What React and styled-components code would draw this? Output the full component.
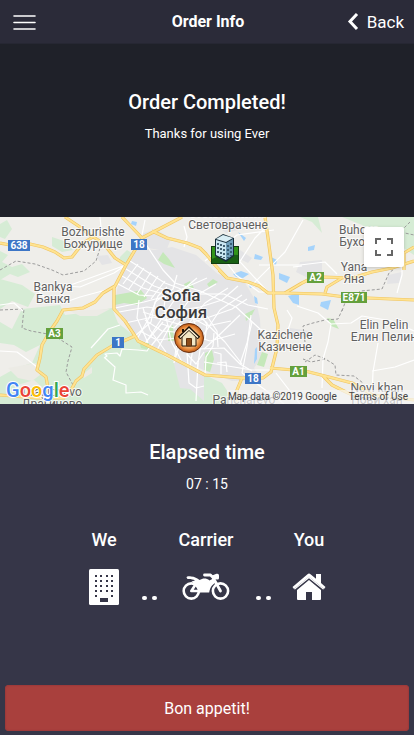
import React from "react";
import styled, { createGlobalStyle } from "styled-components";

const GlobalStyle = createGlobalStyle`
  *, *::before, *::after { box-sizing: border-box; }
  body {
    margin: 0;
    background: #363648;
    color: #fff;
    font-family: Roboto, "Liberation Sans", sans-serif;
    -webkit-font-smoothing: antialiased;
  }
  button { font: inherit; color: inherit; border: 0; cursor: pointer; }
`;

const Page = styled.div`
  min-height: 100vh;
  display: flex;
  flex-direction: column;
`;

const Toolbar = styled.header`
  display: grid;
  grid-template-columns: 1fr auto 1fr;
  align-items: center;
  height: 44px;
  padding: 0 10px 0 12px;
  background: #2b2b39;
  border-bottom: 1px solid #262733;
`;

const ToolbarTitle = styled.h1`
  margin: 0;
  font-size: 16px;
  line-height: 24px;
  font-weight: 700;
`;

const ToolbarButton = styled.button`
  display: flex;
  align-items: center;
  gap: 8px;
  padding: 0;
  background: none;
  font-size: 17px;
  line-height: 24px;
  justify-self: ${(p) => p.$side};
`;

const Hero = styled.section`
  padding: 46px 16px 71px;
  background: #1f2129;
  text-align: center;
`;

const Heading = styled.h2`
  margin: 0;
  font-size: 20px;
  line-height: 24px;
  font-weight: 500;
`;

const Note = styled.p`
  margin: 8px 0 0;
  font-size: ${(p) => (p.$large ? 14 : 13)}px;
  line-height: 24px;
`;

const MapFrame = styled.section`
  position: relative;
  height: 187px;
  overflow: hidden;
  background: #efeeea;
`;

const MapCanvas = styled.svg`
  display: block;
  width: 100%;
  height: 100%;
`;

const FullscreenButton = styled.button`
  position: absolute;
  top: 10px;
  right: 10px;
  width: 40px;
  height: 40px;
  display: grid;
  place-items: center;
  padding: 0;
  background: #fff;
  border-radius: 2px;
  box-shadow: 0 1px 4px -1px rgba(0, 0, 0, 0.3);
`;

const Attribution = styled.div`
  position: absolute;
  right: 0;
  bottom: 0;
  display: flex;
  gap: 12px;
  padding: 0 6px 0 1px;
  background: rgba(245, 245, 245, 0.7);
  color: #444;
  font-size: 10px;
  line-height: 14px;
`;

const TermsLink = styled.a`
  color: inherit;
  text-decoration: none;
`;

const Summary = styled.section`
  flex: 1;
  padding: 36px 16px 24px;
  text-align: center;
`;

const Steps = styled.div`
  display: grid;
  grid-template-columns: 48px 42px 72px 42px 50px;
  justify-content: center;
  margin-top: 32px;
`;

const Step = styled.div`
  display: flex;
  flex-direction: column;
  align-items: center;
`;

const StepLabel = styled.h3`
  margin: 0;
  font-size: 18px;
  line-height: 24px;
  font-weight: 500;
`;

const StepIcon = styled.div`
  display: grid;
  place-items: center;
  height: 40px;
  margin-top: 15px;
`;

const Dots = styled.div`
  align-self: end;
  display: flex;
  justify-content: center;
  gap: 5px;
  padding-bottom: 7px;
`;

const Dot = styled.span`
  width: 5px;
  height: 4px;
  border-radius: 2px;
  background: #fff;
`;

const Footer = styled.footer`
  padding: 0 5px 4px;
`;

const ActionButton = styled.button`
  display: block;
  width: 100%;
  height: 46px;
  border-radius: 4px;
  background: #a9403d;
  font-size: 16px;
  box-shadow: inset 0 0 1px 1px #9d3a3a;
`;

const PARKS = [
  "M0 7L7 3L12 12L5 22L0 20Z",
  "M0 34L8 38L2 45L12 50L22 47L30 55L18 60L10 57L0 63Z",
  "M0 62L22 68L35 77L28 90L12 84L0 92Z",
  "M22 92L60 88L65 98L90 95L112 91L118 106L138 122L167 141L205 158L205 187L0 187L0 160L16 151L32 146L40 128L26 135L14 128L0 126L0 105L12 112Z",
  "M205 158L222 166L236 187L205 187Z",
  "M300 0L312 5L322 16L318 0Z",
  "M342 0L414 0L414 38L402 30L385 24L362 8Z",
  "M120 40L127 33L135 38L130 47L119 45Z",
  "M52 20L64 24L73 33L62 35L52 29Z",
];

const BRIGHT_PARKS = [
  "M115 78L132 75L141 73L147 81L137 88L124 86L115 88Z",
  "M158 43L163 35L169 42L175 51L164 47Z",
  "M207 67L213 62L218 65L209 70Z",
  "M184 67L190 64L194 71L185 73Z",
  "M327 101L333 102L339 112L331 109Z",
  "M257 148L262 135L268 137L264 150Z",
  "M205 136L212 133L214 142L210 155L204 153Z",
  "M168 112L173 108L174 124L168 124Z",
  "M245 97L255 92L251 100L246 104Z",
  "M139 124L149 126L149 133L141 131Z",
];

const BARE = [
  "M8 151L36 146L40 158L32 164L18 161Z",
  "M70 94L110 92L97 99L80 99Z",
  "M18 168L34 163L42 170L38 177L22 175Z",
  "M52 117L62 112L60 122Z",
  "M82 158L92 150L92 156L84 161Z",
];

const URBAN = [
  "M122 55L137 31L155 33L172 30L196 38L218 57L245 66L256 84L260 102L262 140L254 151L262 163L232 164L208 155L168 137L138 121L114 92L117 73Z",
  "M139 18L156 12L171 22L166 34L141 30Z",
  "M300 45L322 43L322 58L308 61L296 55Z",
  "M240 33L252 41L248 46L236 40Z",
  "M96 39L108 38L112 46L102 48Z",
  "M290 111L310 114L305 122L288 119Z",
  "M172 139L204 157L204 184L190 172L180 171Z",
  "M210 4L232 2L242 12L226 16Z",
  "M388 58L402 55L399 66L387 67Z",
];

const WATER = [
  "M132 4L137 5L136 9L131 7Z",
  "M255 37L263 40L261 43L254 42Z",
  "M233 57L241 54L249 57L243 61L236 60Z",
  "M279 56L290 60L287 66L279 62Z",
  "M288 79L299 76L299 88L293 86Z",
  "M321 85L331 83L328 93L320 89Z",
  "M248 65L253 70L250 71Z",
  "M238 15L246 21L244 24Z",
  "M308 30L315 28L314 33L308 34Z",
  "M254 147L255 132L257 130L257 142Z",
  "M360 48L366 51L362 53Z",
  "M271 40L277 43L276 48L271 47Z",
  "M254 79L257 81L258 87L255 86Z",
];

const STREETS = [
  "M126 48L65 70M126 48L114 56L80 70L52 68M142 21L151 35L163 53L175 66L200 74L236 90L260 112L282 122",
  "M130 44L165 66L181 72M126 52L154 69L171 75M122 59L143 71L160 76M118 67L139 78L154 79",
  "M138 47L123 67M144 51L129 72M151 55L137 77M158 59L144 80M165 64L151 82",
  "M115 91L144 85L163 80L182 72L207 61M135 119L151 105L155 85L173 72L177 58",
  "M119 95L147 90L175 94L200 90L222 83L238 69M125 106L153 100L182 108L204 102L232 92L247 82",
  "M137 122L149 101L158 79L167 70M145 127L164 98L180 75L197 61M157 133L170 109L190 82L216 67",
  "M175 142L185 111L205 86L228 71M197 153L202 120L220 93L242 78",
  "M140 114L157 123L177 121L198 132L224 131L240 147L252 154M145 103L162 114L186 116L210 124L235 117",
  "M143 95L168 103L187 98L207 109L231 104M176 81L198 77L224 77L248 88L268 92",
  "M148 126L137 101L139 83M166 135L150 113L143 91M182 145L171 124L164 90L166 77",
  "M204 132L216 121L240 98M240 147L247 126L252 105M205 105L225 125L242 147",
  "M146 125L163 105M151 129L168 108M190 151L196 110L190 91",
  "M204 145L252 153L272 153M242 156L247 130L251 98M242 156L275 180L284 187M162 107L174 111L181 104M207 99L217 114L218 130M198 98L207 106L205 123",
  "M205 158L206 140L213 129L214 116M187 137L196 147L204 135M174 146L177 124L188 122L198 128",
  "M214 135L221 137L221 157M217 146L226 145L227 155",
  "M104 141L107 139L105 137L117 136L120 139L122 132L138 133L147 134L151 128M105 141L115 150L113 163L126 168L126 176L141 175L148 178M91 131L100 121L108 112L120 108",
  "M187 135L189 166L196 171L204 169M198 146L196 184M170 139L187 148",
  "M253 67L285 35L303 3M259 48L300 48L325 45L337 57M302 49L293 50M230 34L267 74M239 46L255 21L268 8M205 44L237 18L274 13",
  "M272 75L259 75L236 58L219 35M402 35L402 58L397 76M323 142L322 171M323 142L328 125L331 107L318 96L297 89M331 107L351 106L362 99L392 104L414 114",
  "M378 126L373 155L372 179M372 154L395 150L414 143M0 134L17 135L28 143L37 150M184 9L187 20L184 30M145 3L142 18M100 0L102 20",
  "M35 70L45 81L63 86L80 80L106 73M0 88L14 86L23 94M276 156L300 187M287 93L292 101L288 113",
];

const BOUNDARIES = [
  "M0 53L16 44L35 47L52 53L63 58L84 54L96 44L101 28",
  "M0 93L24 92L22 111L31 114L53 118L72 130L68 144L66 155L73 168L70 180",
  "M305 145L315 138L326 142L311 145L303 142M305 125L303 109L313 106L325 103L338 102L343 91M327 143L335 148L336 158L354 159L363 166",
  "M342 94L346 83L361 74L382 72L389 56L394 52M410 5L400 15L414 18",
];

const HIGHWAYS = [
  "M0 26L10 28L30 27L43 30L55 35L64 41L72 40L83 26L93 20",
  "M65 0L80 10L90 18L103 26L115 41L126 48",
  "M122 0L142 21L135 33L126 48L115 69L103 76L95 85L83 91L63 93L57 104L50 114L42 128L40 141L37 153L46 160L48 171L40 181",
  "M114 70L114 92L125 104L135 119L138 124L167 138L205 158L242 161L263 161L271 155L277 131L278 108L274 91L273 58L268 21L265 0",
  "M135 119L112 129L97 138L84 152L82 159L76 164L71 173L62 181",
  "M0 178L37 181L65 181",
  "M142 21L182 0",
  "M152 14L167 21L187 26L200 31L206 37L215 48L227 61L248 65L259 69L268 76L285 76L322 77L345 80L414 83",
  "M219 53L227 61M285 76L302 66L310 62L323 60L352 61L372 55L392 51L414 44M404 53L404 36L414 30",
  "M325 76L327 70L342 61",
  "M270 151L305 154L325 159L352 166L373 178L414 183M323 159L332 168L346 175L357 180",
  "M242 161L237 173L237 187",
];

const PLACES = [
  { x: 93, y: 19, lines: ["Bozhurishte", "Божурище"] },
  { x: 53, y: 74, lines: ["Bankya", "Банкя"] },
  { x: 228, y: 0, lines: ["Svetovrachene", "Световрачене"] },
  { x: 359, y: 17, lines: ["Buhovo", "Бухово"] },
  { x: 354, y: 54, lines: ["Yana", "Яна"] },
  { x: 285, y: 122, lines: ["Kazichene", "Казичене"] },
  { x: 384, y: 112, lines: ["Elin Pelin", "Елин Пелин"] },
  { x: 377, y: 175, lines: ["Novi khan", "Нови хан"] },
  { x: 52, y: 179, lines: ["Dragichevo", "Драгичево"] },
  { x: 244, y: 187, lines: ["Pancharevo"] },
];

const SHIELDS = [
  { x: 8, y: 23, w: 22, text: "638", color: "#3d76c6" },
  { x: 131, y: 22, w: 16, text: "18", color: "#3d76c6" },
  { x: 112, y: 120, w: 12, text: "1", color: "#3d76c6" },
  { x: 245, y: 156, w: 16, text: "18", color: "#3d76c6" },
  { x: 46, y: 111, w: 17, text: "A3", color: "#64a03c" },
  { x: 307, y: 55, w: 17, text: "A2", color: "#64a03c" },
  { x: 341, y: 75, w: 26, text: "E871", color: "#64a03c" },
  { x: 290, y: 149, w: 17, text: "A1", color: "#64a03c" },
];

const LOGO_LETTERS = [
  ["G", "#4285f4"],
  ["o", "#ea4335"],
  ["o", "#fbbc05"],
  ["g", "#4285f4"],
  ["l", "#34a853"],
  ["e", "#ea4335"],
];

const PlaceText = styled.text`
  font-size: ${(p) => (p.$city ? 17 : 12)}px;
  font-weight: ${(p) => (p.$city ? 500 : 400)};
  fill: ${(p) => (p.$city ? "#3b3b3b" : "#606060")};
  stroke: #fff;
  stroke-opacity: 0.7;
  stroke-width: 2px;
  paint-order: stroke;
  stroke-linejoin: round;
  text-anchor: middle;
`;

const ShieldText = styled.text`
  font-size: 10px;
  font-weight: 700;
  fill: #fff;
  text-anchor: middle;
`;

const LogoText = styled.text`
  font-size: 20px;
  font-weight: 500;
  stroke: #fff;
  stroke-width: 2px;
  paint-order: stroke;
`;

const Shapes = ({ items, ...rest }) => (
  <g {...rest}>
    {items.map((d) => (
      <path key={d} d={d} />
    ))}
  </g>
);

function CompanyMarker() {
  return (
    <g transform="translate(211 16)">
      <path d="M0 13H28V31H0Z" fill="#123c12" />
      <path d="M1 14H27V30H1Z" fill="#329519" />
      <path d="M1 26L12 21L27 22V30H1Z" fill="#185f12" />
      <path d="M4 6L12 1L23 5V23L15 29L4 23Z" fill="#172d3a" />
      <path d="M5 7L15 10V27L5 22Z" fill="#c9e6f1" />
      <path d="M15 10L22 6V22L15 27Z" fill="#6f9eb9" />
      <path d="M5 6L12 2L22 5L15 9Z" fill="#d9eef5" />
      <path d="M7 10V22M10 11V24M13 12V25" stroke="#173648" strokeWidth="1.5" strokeDasharray="2 2" />
      <path d="M17 12V25M20 10V23" stroke="#173648" strokeWidth="1.2" strokeDasharray="2 2" />
    </g>
  );
}

function HomeMarker() {
  return (
    <g transform="translate(174 106)">
      <circle cx="15" cy="15" r="14.5" fill="url(#homeGlow)" stroke="#6b3212" />
      <path d="M8 14V23H22V14L15 7Z" fill="#f3e8c6" stroke="#211408" />
      <path d="M5 15L15 5.5L25 15" fill="none" stroke="#1c1208" strokeWidth="3.6" />
      <path d="M6 14.5L15 6L24 14.5" fill="none" stroke="#fff3d6" strokeWidth="1.5" />
      <path d="M9 6V9" stroke="#1c1208" strokeWidth="2" />
      <path d="M12.5 15.5H17.5V23H12.5Z" fill="#8c4c1a" stroke="#5c3210" />
    </g>
  );
}

function DeliveryMap() {
  return (
    <MapCanvas viewBox="0 0 414 187" preserveAspectRatio="xMidYMid slice" role="img" aria-label="Map of Sofia">
      <defs>
        <radialGradient id="homeGlow" cx="50%" cy="50%" r="52%">
          <stop offset="0" stopColor="#fff0d0" />
          <stop offset="0.5" stopColor="#fbcd92" />
          <stop offset="0.8" stopColor="#e07f30" />
          <stop offset="1" stopColor="#a8480c" />
        </radialGradient>
      </defs>
      <rect width="414" height="187" fill="#efeeea" />
      <Shapes items={PARKS} fill="#d6ecd5" />
      <Shapes items={BARE} fill="#ecebe5" />
      <Shapes items={URBAN} fill="#e4e4e6" />
      <Shapes items={BRIGHT_PARKS} fill="#c5e8ba" />
      <Shapes items={WATER} fill="#a5d3fb" />
      <Shapes items={BOUNDARIES} fill="none" stroke="#9c9c9c" strokeWidth="1" strokeDasharray="3 2" />
      <Shapes items={STREETS} fill="none" stroke="#fff" strokeWidth="1.2" strokeLinejoin="round" />
      <Shapes items={HIGHWAYS} fill="none" stroke="#efc461" strokeWidth="3.2" strokeLinejoin="round" />
      <Shapes items={HIGHWAYS} fill="none" stroke="#ffe391" strokeWidth="2" strokeLinejoin="round" />
      {SHIELDS.map((s) => (
        <g key={`${s.text}-${s.x}`}>
          <rect x={s.x} y={s.y} width={s.w} height="11" fill={s.color} />
          <ShieldText x={s.x + s.w / 2} y={s.y + 9}>{s.text}</ShieldText>
        </g>
      ))}
      {PLACES.map((place) => (
        <PlaceText key={place.lines[0]} x={place.x} y={place.y}>
          {place.lines.map((line, i) => (
            <tspan key={line} x={place.x} dy={i ? 12 : 0}>{line}</tspan>
          ))}
        </PlaceText>
      ))}
      <PlaceText $city x="181" y="84">
        <tspan x="181">Sofia</tspan>
        <tspan x="181" dy="17">София</tspan>
      </PlaceText>
      <CompanyMarker />
      <HomeMarker />
      <LogoText x="6" y="180">
        {LOGO_LETTERS.map(([letter, color], i) => (
          <tspan key={i} fill={color}>{letter}</tspan>
        ))}
      </LogoText>
    </MapCanvas>
  );
}

const MenuIcon = () => (
  <svg width="24" height="16" viewBox="0 0 24 16" stroke="#fff" strokeWidth="1.6" strokeLinecap="round">
    <path d="M2 2H23M2 8.5H23M2 15H23" />
  </svg>
);

const ChevronIcon = () => (
  <svg width="12" height="18" viewBox="0 0 12 18" fill="none" stroke="#fff" strokeWidth="3">
    <path d="M10 1L3 8.5L10 16" />
  </svg>
);

const FullscreenIcon = () => (
  <svg width="18" height="18" viewBox="0 0 18 18" fill="none" stroke="#666" strokeWidth="2">
    <path d="M1 6V1H6M12 1H17V6M17 12V17H12M6 17H1V12" />
  </svg>
);

const BUILDING_WINDOWS = [6, 11, 16, 21, 26].flatMap((y) =>
  [6, 11, 17, 22].filter((x) => y < 26 || x === 6 || x === 22).map((x) => [x, y])
);

const BuildingIcon = () => (
  <svg width="30" height="36" viewBox="0 0 30 36">
    <rect width="30" height="36" rx="1.5" fill="#fff" />
    <g fill="#363648">
      {BUILDING_WINDOWS.map(([x, y]) => (
        <rect key={`${x}-${y}`} x={x} y={y} width="2" height="2" />
      ))}
      <rect x="11" y="29" width="8" height="4" />
    </g>
  </svg>
);

const MotorcycleIcon = () => (
  <svg width="48" height="28" viewBox="0 0 48 28" fill="none" stroke="#fff">
    <circle cx="9.3" cy="18" r="7.6" strokeWidth="2.6" />
    <circle cx="38.5" cy="18" r="7.6" strokeWidth="2.6" />
    <path d="M4.5 4.5C4.5 3.5 6 3.2 9 3.4C12.5 3.6 15.5 5 17.5 7L20 6C22.5 5 25 5.5 27.5 7.5L32 5L34 9L30 12.5C28.5 14.5 27.5 17 27.2 19.5H17.5L13.5 12L9.5 8.6L13 7.5C11 6.3 8.5 5.8 5.5 6Z" fill="#fff" stroke="none" />
    <path d="M9.3 18H18M9.3 18L14.5 10" strokeWidth="2.6" strokeLinecap="round" />
    <path d="M22.5 2H28.5L31 4.5L38.5 18" strokeWidth="2.8" strokeLinecap="round" strokeLinejoin="round" />
    <path d="M30 2.5L34.5 0.8Q37 0.2 37 2.5V5Q37 7 35 6.5L31 6Z" fill="#fff" stroke="none" />
  </svg>
);

const HouseIcon = () => (
  <svg width="34" height="28" viewBox="0 0 34 28" fill="#fff">
    <path d="M17 7L29 17V26Q29 27 28 27H20V19H14V27H6Q5 27 5 26V17Z" />
    <path d="M0.5 14L15.5 1.2Q17 0 18.5 1.2L24 5.8V1H29V10L33.5 14L32 16L17 3.8L2 16Z" />
    <path d="M2 16L17 3.5L32 16L31 16.6L17 5.2L3 16.6Z" />
  </svg>
);

export default function App() {
  return (
    <Page>
      <GlobalStyle />
      <Toolbar>
        <ToolbarButton $side="start" aria-label="Menu"><MenuIcon /></ToolbarButton>
        <ToolbarTitle>Order Info</ToolbarTitle>
        <ToolbarButton $side="end"><ChevronIcon />Back</ToolbarButton>
      </Toolbar>
      <Hero>
        <Heading>Order Completed!</Heading>
        <Note>Thanks for using Ever</Note>
      </Hero>
      <MapFrame>
        <DeliveryMap />
        <FullscreenButton aria-label="Toggle fullscreen"><FullscreenIcon /></FullscreenButton>
        <Attribution>
          <span>Map data ©2019 Google</span>
          <TermsLink href="#terms">Terms of Use</TermsLink>
        </Attribution>
      </MapFrame>
      <Summary>
        <Heading>Elapsed time</Heading>
        <Note $large>07 : 15</Note>
        <Steps>
          <Step>
            <StepLabel>We</StepLabel>
            <StepIcon><BuildingIcon /></StepIcon>
          </Step>
          <Dots><Dot /><Dot /></Dots>
          <Step>
            <StepLabel>Carrier</StepLabel>
            <StepIcon><MotorcycleIcon /></StepIcon>
          </Step>
          <Dots><Dot /><Dot /></Dots>
          <Step>
            <StepLabel>You</StepLabel>
            <StepIcon><HouseIcon /></StepIcon>
          </Step>
        </Steps>
      </Summary>
      <Footer>
        <ActionButton>Bon appetit!</ActionButton>
      </Footer>
    </Page>
  );
}
